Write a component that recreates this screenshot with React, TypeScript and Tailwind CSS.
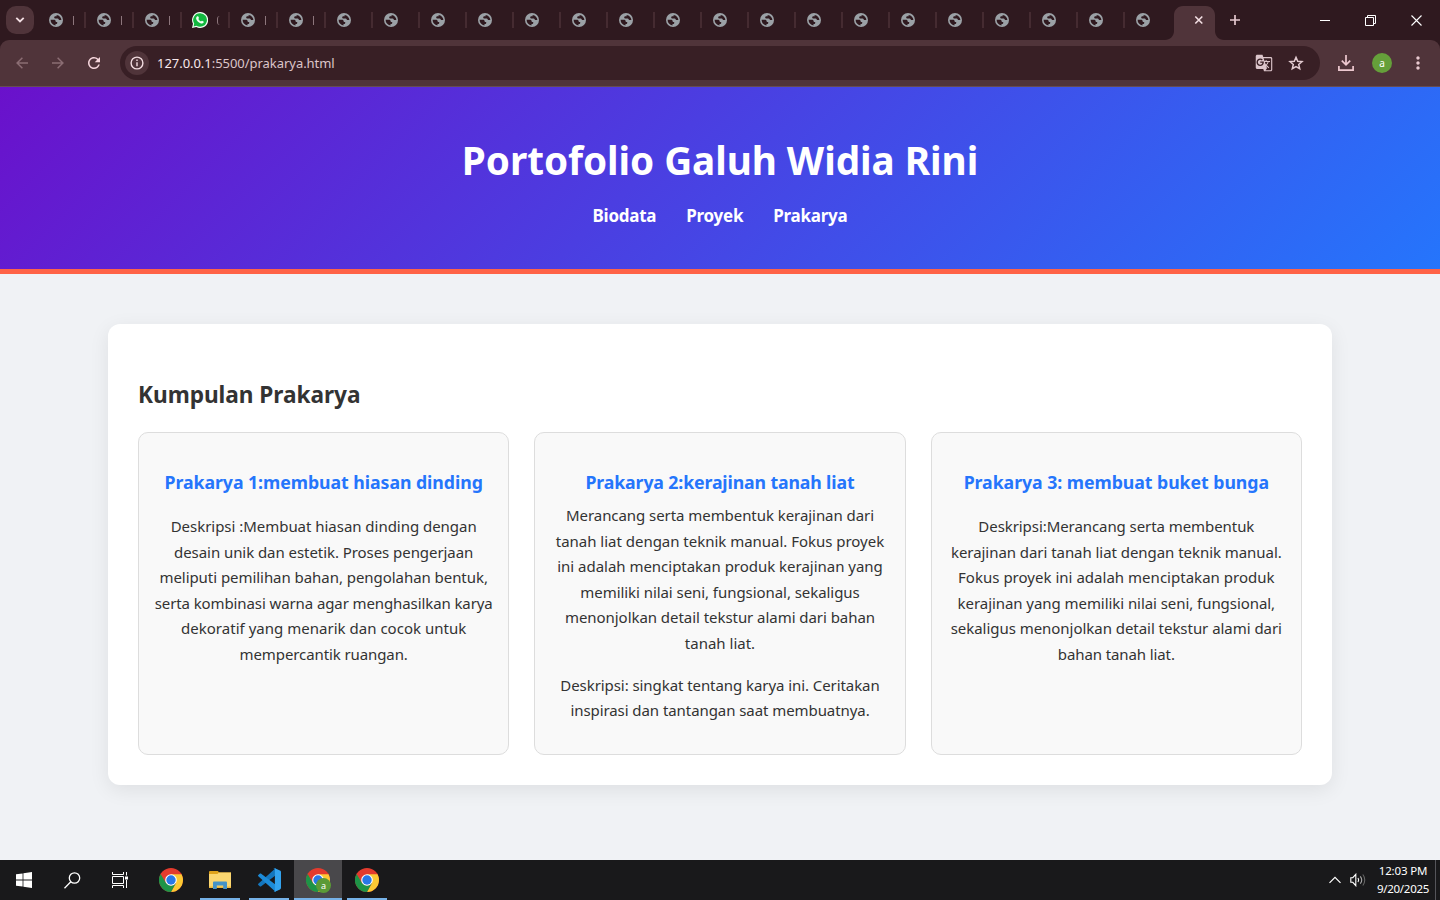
import type { ReactNode } from "react";
import { MdGTranslate, MdMoreVert, MdRefresh } from "react-icons/md";

function Globe() {
  return (
    <svg viewBox="0 0 14 14" className="size-[14px]">
      <circle cx="7" cy="7" r="7" fill="#9ba1a6" />
      <path
        d="M1.600 6.800h3.200c1.200 0 1.900.7 1.900 1.600 0 .4.300.6.800.6h.7v1.100c0 .6-.4 1-1 1h-.7v1.300C3.600 12.100 1.600 9.900 1.600 6.800Z"
        fill="#2f191f"
      />
      <path
        d="M7.600 1.900c2.700.3 4.700 2.500 4.800 5.200h-1.500c-.7 0-1.100-.3-1.300-.9-.1-.4-.5-.6-.9-.6H6.700c-.9 0-1.500-.5-1.500-1.200s.6-1.200 1.400-1.200h1Z"
        fill="#2f191f"
      />
    </svg>
  );
}

function WhatsApp() {
  return (
    <svg viewBox="0 0 16 16" className="size-4">
      <path d="M8 0a8 8 0 0 0-7 11.800L0 16l4.300-1A8 8 0 1 0 8 0Z" fill="#f1fff3" />
      <path d="M8 1.200a6.800 6.800 0 0 0-5.800 10.400l-.6 2.800 2.800-.7A6.800 6.800 0 1 0 8 1.200Z" fill="#12b83f" />
      <path
        d="M5.300 4.300c.4-.3.8-.2 1 .2l.6 1.300c.1.300 0 .6-.6 1.200.6 1.200 1.500 2 2.700 2.600.6-.8.8-.9 1.100-.8l1.400.7c.4.200.4.600.1 1.100-.5.900-1.500 1.200-2.600.9-2.200-.6-4.200-2.500-4.800-4.500-.3-1.100.2-2.100 1.100-2.700Z"
        fill="#f1fff3"
      />
    </svg>
  );
}

function Tab({ wide, whatsapp }: { wide?: boolean; whatsapp?: boolean }) {
  return (
    <div className={wide ? "flex h-full w-[48px] items-center" : "flex h-full w-[47px] items-center"}>
      <span className="flex w-[36px] justify-center">{whatsapp ? <WhatsApp /> : <Globe />}</span>
      {wide && (
        <span className={whatsapp ? "-ml-px h-[9px] w-[3px] rounded-l-full border-l border-[#8d767c]" : "-ml-px h-[9px] w-px bg-[#8d767c]"} />
      )}
      <span className="ml-auto h-4 w-[2px] bg-[#452b31]" />
    </div>
  );
}

function Chrome() {
  return (
    <svg viewBox="0 0 24 24" className="size-6">
      <circle cx="12" cy="12" r="12" fill="#e33b2e" />
      <path d="M12 6.200h10.500c1 2.100 1.500 3.800 1.500 5.800A12 12 0 0 1 12 24l5-9Z" fill="#fcc934" />
      <path d="M1.600 6 7 15l5 2.800 4.900-2.800L12 24A12 12 0 0 1 1.600 6Z" fill="#1e9447" />
      <circle cx="12" cy="12" r="5.800" fill="#fff" />
      <circle cx="12" cy="12" r="4.700" fill="#2878e8" />
    </svg>
  );
}

function Folder() {
  return (
    <svg viewBox="0 0 22 18" className="h-[18px] w-[22px]">
      <path d="M0 1.200C0 .5.500 0 1.200 0h7.600l1.400 1.400H22V5H0Z" fill="#dfa21b" />
      <path d="M0 2.900h8.400l1.600-1.400h12V17H0Z" fill="#fbd670" />
      <path d="M0 15.500h22V17H0Z" fill="#edb93f" />
      <path d="M4 18v-6.200c0-.7.500-1.200 1.200-1.200h11.600c.7 0 1.200.5 1.200 1.200V18h-3.800v-3.600H7.800V18Z" fill="#4593c8" />
    </svg>
  );
}

function VsCode() {
  return (
    <svg viewBox="0 0 24 24" className="size-6">
      <path d="M17.400 1.200 1.300 15.700c-.4.400-.4 1 0 1.300l1.400 1.300c.4.300.9.300 1.200.1L23 3.900 17.900.1Z" fill="#1476bd" />
      <path d="M17.400 22.800 1.300 8.300c-.4-.4-.4-1 0-1.300l1.400-1.300c.4-.3.9-.3 1.200-.1L23 20.100l-5.100 3.800Z" fill="#1c8bd8" />
      <path d="M17.800 23.800a1.500 1.500 0 0 1-1.600-.3c.6.500 1.700.1 1.700-.8V1.300c0-.9-1.100-1.300-1.700-.7.400-.5 1-.6 1.600-.4l5.200 2.400c.6.300 1 .8 1 1.400v16c0 .6-.4 1.100-1 1.400Z" fill="#33a3ee" />
    </svg>
  );
}

const nearTabs = [false, false, false, true, false, false];
const farTabs = Array.from({ length: 17 }, (_, i) => i);

function TabStrip() {
  return (
    <div className="flex h-10 items-center bg-[#2f191f]">
      <div className="ml-[6px] flex h-7 w-7 items-center justify-center rounded-[10px] bg-[#50343a]">
        <svg viewBox="0 0 10 6" className="h-[6px] w-[10px]" fill="none" stroke="#f3dfe3" strokeWidth="1.800">
          <path d="m1.300 .8 3.700 3.700L8.700 .8" />
        </svg>
      </div>
      <div className="ml-1 flex h-full items-center">
        {nearTabs.map((w, i) => (
          <Tab key={i} wide whatsapp={w} />
        ))}
        {farTabs.map((i) => (
          <Tab key={i} />
        ))}
        <div className="flex w-[36px] justify-center">
          <Globe />
        </div>
      </div>
      <div className="ml-[4px] flex h-full items-end">
        <svg viewBox="0 0 59 34" className="h-[34px] w-[59px]" fill="none">
          <path d="M0 34c5 0 9-4 9-9V9c0-5 4-9 9-9h23c5 0 9 4 9 9v16c0 5 4 9 9 9Z" fill="#50343a" />
          <path d="m30.300 10.500 7 7m0-7-7 7" stroke="#f3dfe3" strokeWidth="1.600" />
        </svg>
      </div>
      <svg viewBox="0 0 12 12" className="ml-[5px] size-3" stroke="#e5c8ce" strokeWidth="1.700">
        <path d="M6 1v10M1 6h10" />
      </svg>
      <div className="ml-auto mr-[18px] flex items-center gap-[35px]">
        <span className="h-px w-[10px] bg-white" />
        <svg viewBox="0 0 11 11" className="size-[11px]" fill="none" stroke="#fff">
          <path d="M.5 2.500h8v8h-8zM2.500 2.500v-2h8v8h-2" />
        </svg>
        <svg viewBox="0 0 11 11" className="size-[11px]" stroke="#fff" strokeWidth="1.100">
          <path d="m.5.500 10 10m0-10-10 10" />
        </svg>
      </div>
    </div>
  );
}

function Toolbar() {
  return (
    <div className="bg-[#2f191f]">
      <div className="flex h-[47px] items-center rounded-t-[9px] border-b border-[#664c52] bg-[#50343a] text-[#e9c9cf]">
        <svg viewBox="0 0 12 12" className="ml-4 size-3" fill="none" stroke="#8b6d73" strokeWidth="1.500">
          <path d="M12 6H1.200M6.400.7 1.100 6l5.300 5.300" />
        </svg>
        <svg viewBox="0 0 12 12" className="ml-6 size-3" fill="none" stroke="#8b6d73" strokeWidth="1.500">
          <path d="M0 6h10.800M5.600.7 10.900 6l-5.300 5.300" />
        </svg>
        <MdRefresh className="ml-[21px] size-[18px] text-[#f5d5db]" />
        <div className="ml-[17px] flex h-[34px] w-[1200px] items-center rounded-full bg-[#381f25]">
          <div className="ml-[5px] flex size-6 items-center justify-center rounded-full bg-[#50343a]">
            <svg viewBox="0 0 14 14" className="size-[14px]" fill="none" stroke="#f2dce0" strokeWidth="1.400">
              <circle cx="7" cy="7" r="5.900" />
              <path d="M7 6.200v4M7 3.500V5" />
            </svg>
          </div>
          <div className="ml-2 pt-px font-['Noto_Sans',sans-serif] text-[13px] tracking-[-0.040px] whitespace-nowrap text-[#dcc5c9]">
            <span className="text-[#f8e8eb]">127.0.0.1</span>:5500/prakarya.html
          </div>
          <MdGTranslate className="ml-auto size-[18px] text-[#dcc5cb]" />
          <svg viewBox="0 0 16 16" className="mr-4 ml-[15px] size-4" fill="none" stroke="#e4ccd2" strokeWidth="1.500">
            <path d="m8 2.300 1.700 4 4.300.4-3.300 2.800 1 4.200L8 11.500l-3.700 2.200 1-4.200L2 6.700l4.300-.4Z" />
          </svg>
        </div>
        <svg viewBox="0 0 16 16" className="ml-[18px] size-4" fill="none" stroke="#eec9d0" strokeWidth="1.700">
          <path d="M8 0v9.500M3.800 5.700 8 9.900l4.200-4.200M.9 11v4.100h14.200V11" />
        </svg>
        <span className="ml-[18px] flex size-5 items-center justify-center rounded-full bg-[#65a03a] font-['Noto_Sans',sans-serif] text-[10px] leading-none text-white">
          a
        </span>
        <MdMoreVert className="ml-[16px] size-5" />
      </div>
    </div>
  );
}

type Line = { text: string; fit: string };

function Lines({ lines }: { lines: Line[] }) {
  return (
    <p className="text-[15px] leading-[25.600px] text-[#333]">
      {lines.map((line) => (
        <span key={line.text} className={"block whitespace-nowrap " + line.fit}>
          {line.text}
        </span>
      ))}
    </p>
  );
}

function Card({ title, titleFit, children }: { title: string; titleFit: string; children: ReactNode }) {
  return (
    <article className="h-[323px] rounded-[10px] border border-[#ddd] bg-[#f9f9f9] px-[10px] pt-[34px] text-center">
      <h3 className={"text-[17.700px] leading-[30px] font-bold whitespace-nowrap text-[#2575fc] " + titleFit}>
        {title}
      </h3>
      {children}
    </article>
  );
}

function Page() {
  return (
    <main className="flex-1 bg-[#f0f2f5] font-['Noto_Sans',sans-serif]">
      <header className="flex h-[187px] flex-col items-center border-b-[5px] border-[#ff6347] bg-linear-[135deg,#6a11cb,#2575fc] text-white">
        <h1 className="mt-[40px] text-[38.700px] leading-[66px] font-bold tracking-[-0.060px]">Portofolio Galuh Widia Rini</h1>
        <nav className="mt-[9px] flex gap-[30px] text-[17px] leading-[28px] font-bold tracking-[-0.250px]">
          <a>Biodata</a>
          <a>Proyek</a>
          <a>Prakarya</a>
        </nav>
      </header>
      <section className="mx-auto mt-[50px] h-[461px] w-[1224px] rounded-xl bg-white px-[30px] pt-[52px] shadow-[0_5px_20px_rgba(0,0,0,0.080)]">
        <h2 className="text-[22.650px] leading-[38px] font-bold tracking-[-0.050px] text-[#333]">Kumpulan Prakarya</h2>
        <div className="mt-[18px] grid grid-cols-3 gap-[25px]">
          <Card title="Prakarya 1:membuat hiasan dinding" titleFit="tracking-[-0.040px]">
            <div className="mt-[17px]">
              <Lines
                lines={[
                  { text: "Deskripsi :Membuat hiasan dinding dengan", fit: "tracking-[-0.030px]" },
                  { text: "desain unik dan estetik. Proses pengerjaan", fit: "tracking-[-0.060px]" },
                  { text: "meliputi pemilihan bahan, pengolahan bentuk,", fit: "tracking-[-0.050px]" },
                  { text: "serta kombinasi warna agar menghasilkan karya", fit: "tracking-[-0.100px]" },
                  { text: "dekoratif yang menarik dan cocok untuk", fit: "tracking-[0.020px]" },
                  { text: "mempercantik ruangan.", fit: "tracking-[-0.100px]" },
                ]}
              />
            </div>
          </Card>
          <Card title="Prakarya 2:kerajinan tanah liat" titleFit="tracking-[-0.120px]">
            <div className="mt-[6px] flex flex-col gap-4">
              <Lines
                lines={[
                  { text: "Merancang serta membentuk kerajinan dari", fit: "tracking-[-0.060px]" },
                  { text: "tanah liat dengan teknik manual. Fokus proyek", fit: "tracking-[-0.020px]" },
                  { text: "ini adalah menciptakan produk kerajinan yang", fit: "tracking-[-0.020px]" },
                  { text: "memiliki nilai seni, fungsional, sekaligus", fit: "tracking-[-0.060px]" },
                  { text: "menonjolkan detail tekstur alami dari bahan", fit: "tracking-[-0.050px]" },
                  { text: "tanah liat.", fit: "tracking-normal" },
                ]}
              />
              <Lines
                lines={[
                  { text: "Deskripsi: singkat tentang karya ini. Ceritakan", fit: "tracking-[-0.070px]" },
                  { text: "inspirasi dan tantangan saat membuatnya.", fit: "tracking-[-0.070px]" },
                ]}
              />
            </div>
          </Card>
          <Card title="Prakarya 3: membuat buket bunga" titleFit="tracking-[-0.040px]">
            <div className="mt-[17px]">
              <Lines
                lines={[
                  { text: "Deskripsi:Merancang serta membentuk", fit: "tracking-[-0.070px]" },
                  { text: "kerajinan dari tanah liat dengan teknik manual.", fit: "tracking-[-0.050px]" },
                  { text: "Fokus proyek ini adalah menciptakan produk", fit: "tracking-[0.020px]" },
                  { text: "kerajinan yang memiliki nilai seni, fungsional,", fit: "tracking-[-0.060px]" },
                  { text: "sekaligus menonjolkan detail tekstur alami dari", fit: "tracking-[-0.040px]" },
                  { text: "bahan tanah liat.", fit: "tracking-[-0.100px]" },
                ]}
              />
            </div>
          </Card>
        </div>
      </section>
    </main>
  );
}

function Taskbar() {
  return (
    <footer className="flex h-10 items-center bg-[#19191b]">
      <svg viewBox="0 0 16 16" className="ml-4 size-4" fill="#fff">
        <path d="M0 2.300 6.600 1.400V7.600H0ZM7.400 1.300 16 0v7.600H7.400ZM0 8.400h6.600v6.200L0 13.700ZM7.400 8.400H16V16l-8.600-1.300Z" />
      </svg>
      <svg viewBox="0 0 17 17" className="ml-8 size-[17px]" fill="none" stroke="#fff" strokeWidth="1.300">
        <circle cx="10.500" cy="6" r="5.200" />
        <path d="M6.800 9.800.5 16.200" />
      </svg>
      <svg viewBox="0 0 17 16" className="ml-[31px] h-4 w-[17px]" fill="none" stroke="#fff" strokeWidth="1">
        <path d="M.5 0v2.500h11V0M.5 16v-2.500h11V16M.5 4.500h11v7H.5zM14.500 0v3.500M14.500 8v8" />
        <path d="M13 4.500h3v3h-3z" fill="#fff" stroke="none" />
      </svg>
      <div className="ml-[30px] flex h-full items-center">
        <Chrome />
      </div>
      <div className="ml-[17px] flex h-full w-10 items-center justify-center border-b-2 border-[#76b2e8] pt-[2px]">
        <Folder />
      </div>
      <div className="ml-[9px] flex h-full w-10 items-center justify-center border-b-2 border-[#76b2e8] pt-[2px]">
        <VsCode />
      </div>
      <div className="relative ml-[5px] flex h-full w-12 items-center justify-center border-b-2 border-[#76b2e8] bg-[#49484b] pt-[2px]">
        <Chrome />
        <span className="absolute top-[18px] left-[22px] flex size-[15px] items-center justify-center rounded-full bg-[#5b9a36] font-['Noto_Sans',sans-serif] text-[9px] leading-none text-white">
          a
        </span>
      </div>
      <div className="ml-[5px] flex h-full w-10 items-center justify-center border-b-2 border-[#76b2e8] pt-[2px]">
        <Chrome />
      </div>
      <svg viewBox="0 0 12 8" className="ml-auto h-2 w-3" fill="none" stroke="#fff" strokeWidth="1.200">
        <path d="m.5 6.800 5.500-5.500 5.500 5.500" />
      </svg>
      <svg viewBox="0 0 17 14" className="ml-[9px] h-[14px] w-[17px]" fill="none" stroke="#fff" strokeWidth="1.100">
        <path d="M.8 4.700h2l3-3.400v11.400l-3-3.400h-2z" />
        <path d="M8 5c.8 1.200.8 2.800 0 4" />
        <path d="M10.300 3.300c1.700 2.200 1.700 5.200 0 7.400" stroke="#aaa" />
        <path d="M12.800 1.500c2.600 3.200 2.600 7.800 0 11" stroke="#666" />
      </svg>
      <div className="ml-2 w-[56px] text-center font-['Noto_Sans',sans-serif] text-[11.500px] leading-[18px] whitespace-nowrap text-white">
        <div className="tracking-[-0.150px]">12:03 PM</div>
        <div className="tracking-[-0.280px]">9/20/2025</div>
      </div>
      <span className="mr-1 ml-[4px] h-full w-px bg-[#55555a]" />
    </footer>
  );
}

export default function App() {
  return (
    <div className="flex h-[900px] w-[1440px] flex-col overflow-hidden">
      <TabStrip />
      <Toolbar />
      <Page />
      <Taskbar />
    </div>
  );
}
